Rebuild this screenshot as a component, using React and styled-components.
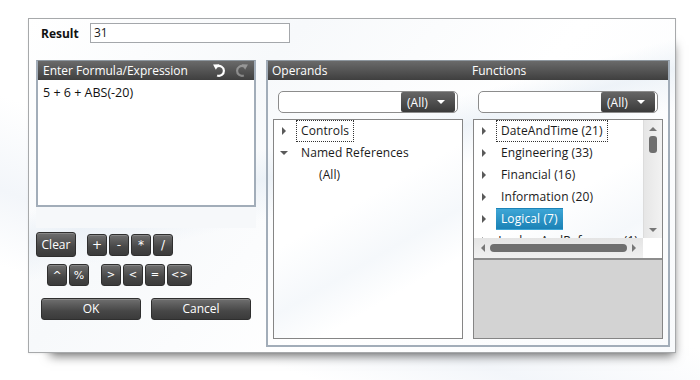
import React from "react";
import styled, { createGlobalStyle } from "styled-components";

const Global = createGlobalStyle`
  html, body { margin: 0; padding: 0; background: #ffffff; }
  body { font-family: "Open Sans", "Noto Sans", sans-serif; font-size: 12px; color: #1a1a1a; }
  * { box-sizing: border-box; }
`;

const Page = styled.div`
  width: 700px;
  height: 380px;
  padding: 18px 0 0 28px;
  background: linear-gradient(200deg, #ffffff 55%, #f3f6fa 70%, #ffffff 82%);
`;

const Dialog = styled.div`
  width: 648px;
  height: 335px;
  border: 1px solid #a7a9ab;
  padding: 4px 5px 0 7px;
  background:
    linear-gradient(165deg, rgba(255,255,255,0) 38%, rgba(225,234,243,0.55) 44%, rgba(255,255,255,0) 52%),
    linear-gradient(130deg, #ffffff 0%, #f7f9fb 30%, #ffffff 60%, #f8fafc 100%);
  box-shadow: 10px 15px 10px -12px rgba(0, 0, 0, 0.55), 0 1px 2px rgba(0,0,0,0.06);
`;

const ResultRow = styled.div`
  display: flex;
  align-items: center;
  height: 20px;
  padding-left: 5px;
`;

const ResultLabel = styled.span`
  width: 49px;
  font-weight: 700;
  font-size: 12px;
  color: #111;
`;

const ResultBox = styled.div`
  width: 200px;
  height: 20px;
  border: 1px solid #a4a7ab;
  background: #fff;
  padding: 0 3px;
  line-height: 18px;
  font-size: 12px;
`;

const Body = styled.div`
  display: flex;
  gap: 10px;
  margin-top: 17px;
`;

const LeftCol = styled.div`
  width: 220px;
  display: flex;
  flex-direction: column;
`;

const Panel = styled.div`
  display: flex;
  flex-direction: column;
  width: ${(p) => p.$w}px;
  height: ${(p) => p.$h}px;
  border: 2px solid #a2adb9;
  border-top: 1px solid #8e979f;
`;

const Header = styled.div`
  height: 19px;
  flex: none;
  background: linear-gradient(#6a6a6a, #3f3f3f);
  color: #fff;
  font-size: 12px;
  display: flex;
  align-items: center;
  padding-left: ${(p) => p.$pl || 5}px;
`;

const HeaderGrid = styled(Header)`
  display: grid;
  grid-template-columns: 190px 190px;
  column-gap: 10px;
  padding: 0 5px 0 4px;
`;

const HeaderTitle = styled.span`
  flex: 1;
`;

const IconBtn = styled.span`
  display: inline-flex;
  width: 20px;
  height: 18px;
  align-items: center;
  justify-content: center;
  margin-right: ${(p) => p.$mr || 0}px;
  opacity: ${(p) => (p.$off ? 0.35 : 1)};
`;

const FormulaArea = styled.div`
  flex: 1;
  background: #fff;
  padding: 4px 5px;
  font-size: 12.5px;
  color: #111;
`;

const Strip = styled.div`
  height: 21px;
  background: #f6f8fa;
`;

const KeyRow = styled.div`
  display: flex;
  align-items: center;
  gap: ${(p) => p.$gap || 0}px;
  margin-top: ${(p) => p.$mt || 0}px;
  padding-left: ${(p) => p.$pl || 0}px;
`;

const KeyGroup = styled.div`
  display: flex;
  gap: 2px;
`;

const Btn = styled.button`
  width: ${(p) => p.$w || 20}px;
  height: ${(p) => p.$h || 22}px;
  padding: 0;
  border: 1px solid #2f2f2f;
  border-radius: 3px;
  background: linear-gradient(#6f6f6f, #474747 60%, #3b3b3b);
  box-shadow: inset 0 1px 0 rgba(255,255,255,0.18);
  color: #fff;
  font-family: ${(p) => (p.$sym ? '"DejaVu Sans", sans-serif' : '"Open Sans", sans-serif')};
  font-size: ${(p) => p.$fs || 12}px;
  line-height: 1;
  cursor: pointer;
`;

const Columns = styled.div`
  flex: 1;
  display: grid;
  grid-template-columns: 190px 190px;
  column-gap: 10px;
  padding: 0 5px 6px 5px;
`;

const Column = styled.div`
  display: flex;
  flex-direction: column;
`;

const Search = styled.div`
  margin: 11px 5px 6px 5px;
  height: 22px;
  border: 1px solid #8c8c8c;
  border-radius: 5px;
  background: #fff;
  display: flex;
  justify-content: flex-end;
  align-items: center;
  padding-right: 2px;
`;

const Drop = styled.div`
  width: 54px;
  height: 20px;
  border-radius: 2px;
  background: linear-gradient(#666, #3a3a3a);
  color: #fff;
  font-size: 12px;
  display: flex;
  align-items: center;
  padding-left: 6px;
  gap: 9px;
`;

const Tree = styled.div`
  flex: 1;
  border: 1px solid #858585;
  background: linear-gradient(150deg, #ffffff 40%, #f5f8fb 60%, #ffffff 75%);
  display: flex;
  flex-direction: column;
  overflow: hidden;
`;

const TreeTop = styled.div`
  height: 118px;
  display: flex;
  flex: none;
`;

const TreeList = styled.div`
  flex: 1;
  overflow: hidden;
`;

const Item = styled.div`
  height: 22px;
  display: flex;
  align-items: center;
  padding-left: ${(p) => p.$indent}px;
  font-size: 12px;
  letter-spacing: 0.1px;
  white-space: nowrap;
`;

const Arrow = styled.span`
  width: 22px;
  display: flex;
  align-items: center;
  padding-left: ${(p) => (p.$down ? 6 : 8)}px;
`;

const Label = styled.span`
  height: 22px;
  line-height: 20px;
  padding: 0 4px;
  border: 1px ${(p) => (p.$focus ? "dotted #333" : "solid transparent")};
  background: ${(p) => (p.$sel ? "linear-gradient(#3ea6d6, #1b82b6)" : "transparent")};
  color: ${(p) => (p.$sel ? "#fff" : "#1a1a1a")};
`;

const VScroll = styled.div`
  width: 19px;
  flex: none;
  background: linear-gradient(90deg, #e6e6e6, #f2f2f2);
  border-left: 1px solid #dcdcdc;
  display: flex;
  flex-direction: column;
  align-items: center;
  padding: 7px 0 6px;
`;

const VThumb = styled.div`
  width: 8px;
  height: 17px;
  border-radius: 3px;
  background: #6f6f6f;
  margin-top: 5px;
`;

const Spacer = styled.div`
  flex: 1;
`;

const HRow = styled.div`
  height: 20px;
  display: flex;
  flex: none;
`;

const HScroll = styled.div`
  flex: 1;
  background: linear-gradient(#e4e4e4, #f0f0f0);
  display: flex;
  align-items: center;
  padding: 0 7px 0 7px;
  gap: 5px;
`;

const HThumb = styled.div`
  flex: 1;
  height: 8px;
  border-radius: 4px;
  background: #6f6f6f;
`;

const Corner = styled.div`
  width: 19px;
  background: #fff;
`;

const Desc = styled.div`
  flex: 1;
  background: #d3d3d3;
  border-top: 2px solid #8d8d8d;
`;

const Tri = ({ dir, color = "#5a5a5a", size = 5 }) => {
  const s = size;
  const pts = {
    right: `0,0 ${s},${s} 0,${2 * s}`,
    left: `${s},0 0,${s} ${s},${2 * s}`,
    down: `0,0 ${2 * s},0 ${s},${s}`,
    up: `0,${s} ${2 * s},${s} ${s},0`,
  }[dir];
  const horiz = dir === "right" || dir === "left";
  return (
    <svg width={horiz ? s : 2 * s} height={horiz ? 2 * s : s} style={{ display: "block" }}>
      <polygon points={pts} fill={color} />
    </svg>
  );
};

const UndoIcon = ({ flip }) => (
  <svg width="15" height="15" viewBox="0 0 14 14" style={{ transform: flip ? "scaleX(-1)" : "none" }}>
    <path d="M4.5 3.2 A4.6 4.6 0 1 1 4.8 11.6" fill="none" stroke="#fff" strokeWidth="2" />
    <polygon points="1,1.5 6.8,1.2 3.6,6.4" fill="#fff" />
  </svg>
);

const operands = [
  { text: "Controls", indent: 0, arrow: "right", focus: true },
  { text: "Named References", indent: 0, arrow: "down" },
  { text: "(All)", indent: 18 },
];

const functions = [
  { text: "DateAndTime (21)", focus: true },
  { text: "Engineering (33)" },
  { text: "Financial (16)" },
  { text: "Information (20)" },
  { text: "Logical (7)", sel: true },
  { text: "LookupAndReference (1)" },
];

function TreeItem({ it }) {
  return (
    <Item $indent={it.indent || 0}>
      <Arrow $down={it.arrow === "down"}>
        {it.arrow === "down" ? <Tri dir="down" size={4} /> : it.arrow === "right" ? <Tri dir="right" size={4} /> : null}
      </Arrow>
      <Label $focus={it.focus} $sel={it.sel}>{it.text}</Label>
    </Item>
  );
}

export default function App() {
  return (
    <>
      <Global />
      <Page>
        <Dialog>
          <ResultRow>
            <ResultLabel>Result</ResultLabel>
            <ResultBox>31</ResultBox>
          </ResultRow>
          <Body>
            <LeftCol>
              <Panel $w={220} $h={147}>
                <Header>
                  <HeaderTitle>Enter Formula/Expression</HeaderTitle>
                  <IconBtn $mr={2}><UndoIcon /></IconBtn>
                  <IconBtn $off $mr={3}><UndoIcon flip /></IconBtn>
                </Header>
                <FormulaArea>5 + 6 + ABS(-20)</FormulaArea>
              </Panel>
              <Strip />
              <KeyRow $mt={4} $gap={11}>
                <Btn $w={40} $h={25}>Clear</Btn>
                <KeyGroup>
                  <Btn $sym>+</Btn>
                  <Btn $sym>-</Btn>
                  <Btn $sym>*</Btn>
                  <Btn $sym>/</Btn>
                </KeyGroup>
              </KeyRow>
              <KeyRow $mt={7} $gap={12} $pl={11}>
                <KeyGroup>
                  <Btn $sym $fs={11}>^</Btn>
                  <Btn $sym $fs={11}>%</Btn>
                </KeyGroup>
                <KeyGroup>
                  <Btn $sym $fs={10}>&gt;</Btn>
                  <Btn $sym $fs={10}>&lt;</Btn>
                  <Btn $sym $fs={10}>=</Btn>
                  <Btn $sym $fs={10} $w={25}>&lt;&gt;</Btn>
                </KeyGroup>
              </KeyRow>
              <KeyRow $mt={12} $gap={10} $pl={5}>
                <Btn $w={100}>OK</Btn>
                <Btn $w={100}>Cancel</Btn>
              </KeyRow>
            </LeftCol>
            <Panel $w={404} $h={287}>
              <HeaderGrid>
                <span>Operands</span>
                <span>Functions</span>
              </HeaderGrid>
              <Columns>
                <Column>
                  <Search>
                    <Drop>(All) <Tri dir="down" color="#fff" size={4} /></Drop>
                  </Search>
                  <Tree>
                    <TreeList>
                      {operands.map((it) => (
                        <TreeItem key={it.text} it={it} />
                      ))}
                    </TreeList>
                  </Tree>
                </Column>
                <Column>
                  <Search>
                    <Drop>(All) <Tri dir="down" color="#fff" size={4} /></Drop>
                  </Search>
                  <Tree>
                    <TreeTop>
                      <TreeList>
                        {functions.map((it) => (
                          <TreeItem key={it.text} it={{ ...it, arrow: "right" }} />
                        ))}
                      </TreeList>
                      <VScroll>
                        <Tri dir="up" color="#777" size={4} />
                        <VThumb />
                        <Spacer />
                        <Tri dir="down" color="#777" size={4} />
                      </VScroll>
                    </TreeTop>
                    <HRow>
                      <HScroll>
                        <Tri dir="left" color="#777" size={4} />
                        <HThumb />
                        <Tri dir="right" color="#777" size={4} />
                      </HScroll>
                      <Corner />
                    </HRow>
                    <Desc />
                  </Tree>
                </Column>
              </Columns>
            </Panel>
          </Body>
        </Dialog>
      </Page>
    </>
  );
}
